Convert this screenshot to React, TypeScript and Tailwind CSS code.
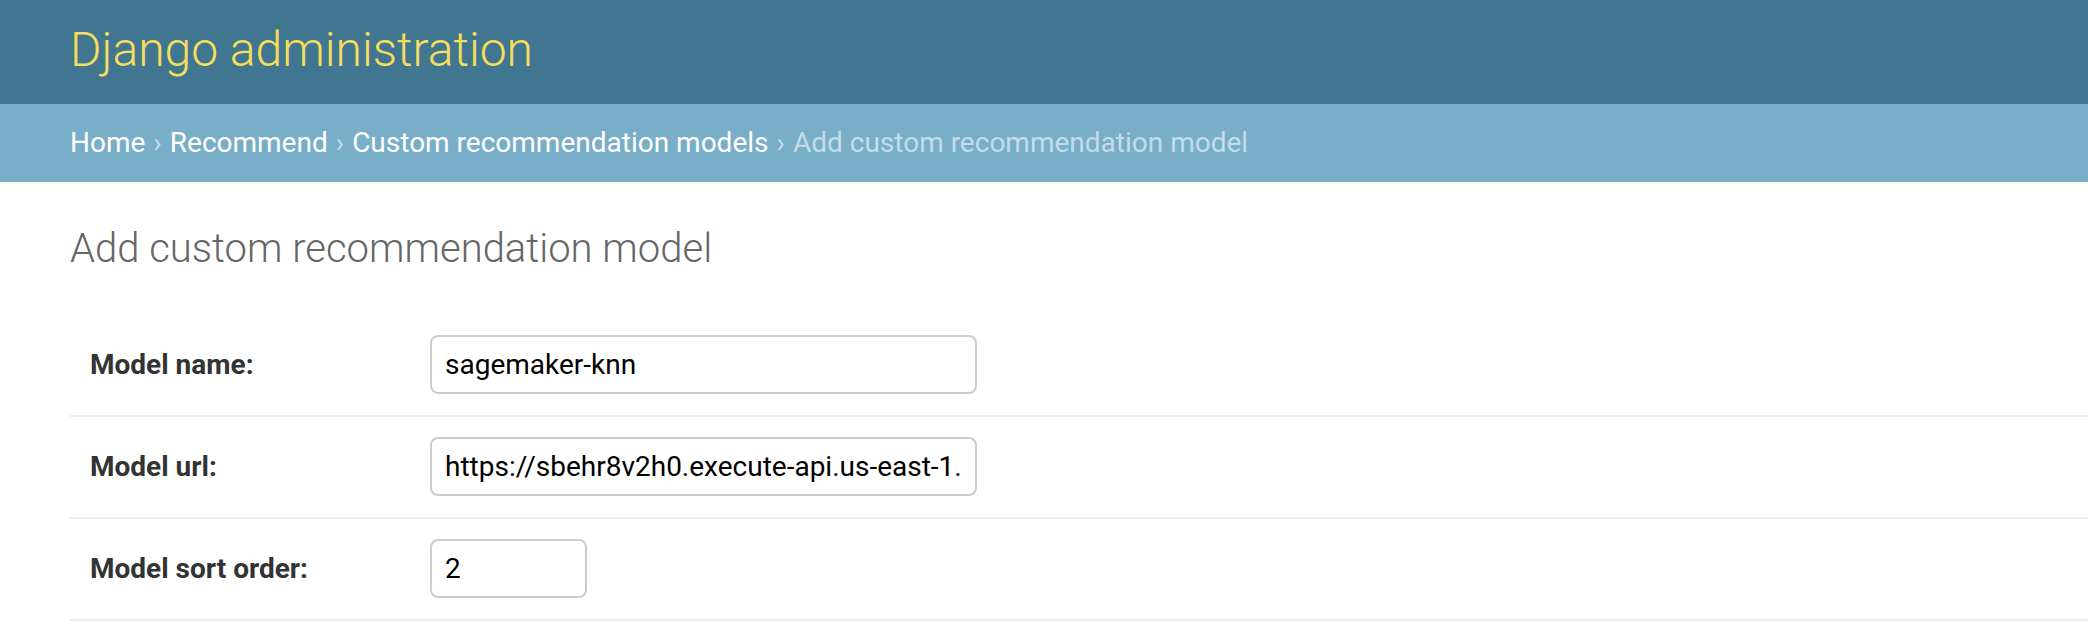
const rows = [
  { label: "Model name:", value: "sagemaker-knn", width: "w-[547px]" },
  { label: "Model url:", value: "https://sbehr8v2h0.execute-api.us-east-1.amazonaws.com/prod/recommend", width: "w-[547px]" },
  { label: "Model sort order:", value: "2", width: "w-[157px]" },
];

const App = () => {
  return (
    <div className="min-h-screen bg-white font-['Roboto','Liberation_Sans',sans-serif]">
      <div className="h-[104px] bg-[#417690] px-[70px] flex items-center">
        <h1 className="text-[48px] font-light text-[#f5dd5d] leading-none -mt-[4px]">
          Django administration
        </h1>
      </div>

      <div className="h-[78px] bg-[#79aec8] px-[70px] flex items-center text-[28px] text-[#c4dce8]">
        <span className="text-white">Home</span>
        <span className="mx-[8px]">›</span>
        <span className="text-white">Recommend</span>
        <span className="mx-[8px]">›</span>
        <span className="text-white">Custom recommendation models</span>
        <span className="mx-[8px]">›</span>
        <span>Add custom recommendation model</span>
      </div>

      <div className="pl-[70px] pt-[42px]">
        <h1 className="text-[40px] font-light text-[#666] leading-tight mb-[41px]">
          Add custom recommendation model
        </h1>

        <div className="flex flex-col">
          {rows.map((row) => (
            <div
              key={row.label}
              className="flex items-center pl-[20px] pt-[20px] pb-[21px] border-b-2 border-[#eee]"
            >
              <label className="w-[340px] text-[28px] font-bold text-[#333]">
                {row.label}
              </label>
              <input
                readOnly
                value={row.value}
                className={`${row.width} h-[59px] border-2 border-[#ccc] rounded-[8px] px-[13px] text-[28px] text-black bg-white outline-none font-['Roboto','Liberation_Sans',sans-serif]`}
              />
            </div>
          ))}
        </div>
      </div>
    </div>
  );
};

export default App;
